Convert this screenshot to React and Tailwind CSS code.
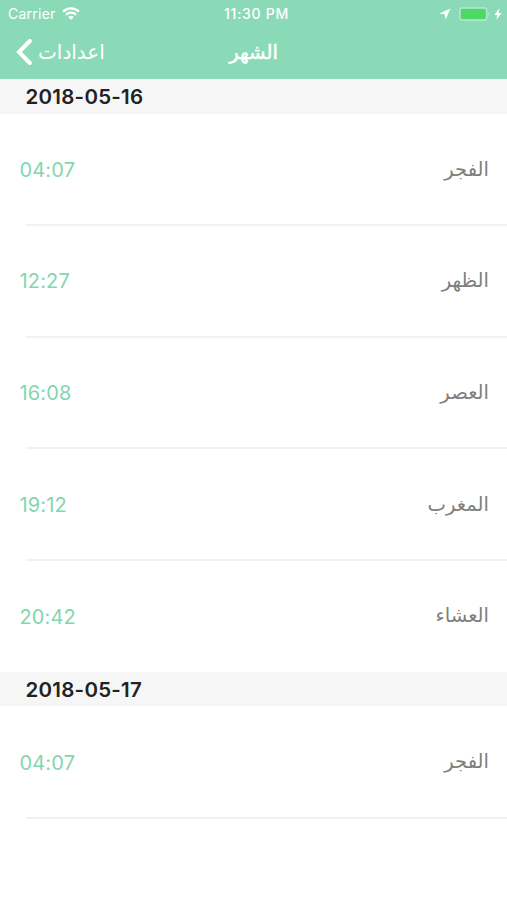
const days = [
  {
    date: '2018-05-16',
    prayers: [
      ['الفجر', '04:07'],
      ['الظهر', '12:27'],
      ['العصر', '16:08'],
      ['المغرب', '19:12'],
      ['العشاء', '20:42'],
    ],
  },
  { date: '2018-05-17', prayers: [['الفجر', '04:07']] },
];

function WifiIcon() {
  return (
    <svg width="18" height="13" viewBox="0 0 18 13" fill="none" stroke="#fff" strokeWidth="2.3">
      <path d="M1.1 4.6a11.2 11.2 0 0 1 15.8 0" />
      <path d="M3.9 7.7a7.2 7.2 0 0 1 10.2 0" />
      <path d="M9 12.8 6.2 10a4 4 0 0 1 5.6 0z" fill="#fff" stroke="none" />
    </svg>
  );
}

function StatusBar() {
  return (
    <div className="grid h-[27px] grid-cols-[1fr_auto_1fr] items-center text-[14px] leading-[27px]">
      <div className="flex items-center gap-[6px] pl-[8px]">
        <span className="tracking-[0.25px]">Carrier</span>
        <WifiIcon />
      </div>
      <span className="pl-[6px] text-[14px] font-medium tracking-[0.7px]">11:30 PM</span>
      <div className="flex items-center justify-end pr-[5px]">
        <svg width="12" height="12" viewBox="0 0 12 12" className="mr-[8px]">
          <path d="M11.5.4.3 5.6l5.4.7.9 5.2z" fill="#fff" />
        </svg>
        <svg width="31" height="14" viewBox="0 0 31 14">
          <rect x=".8" y=".8" width="27" height="12.4" rx="2.4" fill="none" stroke="#b4ead0" strokeWidth="1.2" />
          <rect x="2" y="2" width="24.6" height="10" rx="1" fill="#4cd964" />
          <path d="M29.5 5v4q1.3-.6 1.3-2t-1.3-2z" fill="#b4ead0" />
        </svg>
        <svg width="8" height="12" viewBox="0 0 8 12" className="ml-[4px]">
          <path d="M5.3.2.4 6.9h2.8l-.9 4.9L7.6 5H4.6z" fill="#fff" />
        </svg>
      </div>
    </div>
  );
}

function NavBar() {
  return (
    <div className="grid h-[50px] grid-cols-[1fr_auto_1fr] items-center">
      <button className="flex items-center gap-[6px] pl-[16px]">
        <svg width="16" height="26" viewBox="0 0 16 26" fill="none" stroke="#fff" strokeWidth="4" strokeLinecap="round">
          <path d="M13.8 2 3 13l10.8 11" />
        </svg>
        <span dir="rtl" className="text-[20px] leading-[30px]">اعدادات</span>
      </button>
      <h1 dir="rtl" className="text-[19.6px] leading-[30px] [-webkit-text-stroke:0.5px_white]">الشهر</h1>
    </div>
  );
}

export default function App() {
  return (
    <main className="h-[900px] w-[507px] overflow-hidden bg-white font-[Inter,'DejaVu_Sans',sans-serif]">
      <header className="h-[79px] bg-[#8bdab7] text-white">
        <StatusBar />
        <NavBar />
      </header>
      {days.map((day) => (
        <section key={day.date}>
          <h2 className="flex h-[34.5px] items-center bg-[#f6f6f6] pl-[25.5px] pt-[2px] text-[20.5px] font-semibold tracking-[0.25px] text-[#222]">
            {day.date}
          </h2>
          {day.prayers.map(([name, time], i) => (
            <div key={name} className="h-[111.7px]">
              <div className="flex h-[110.5px] items-center justify-between pl-[19.5px] pr-[18px]">
                <span className="pt-[2px] text-[20px] tracking-[0.15px] text-[#83d6b0]">{time}</span>
                <span dir="rtl" className="pt-[1px] text-[19.6px] text-[#808080]">{name}</span>
              </div>
              {(i < day.prayers.length - 1 || day.prayers.length === 1) && (
                <div className="ml-[26px] h-[2px] bg-[#f2f2f2]" />
              )}
            </div>
          ))}
        </section>
      ))}
    </main>
  );
}
